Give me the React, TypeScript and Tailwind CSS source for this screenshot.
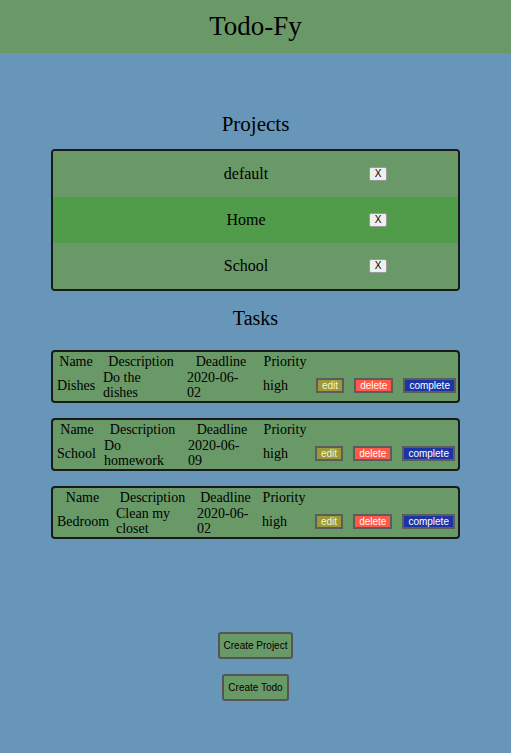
import React from 'react';

interface Task {
  name: string;
  desc: string[];
  deadline: string[];
  priority: string;
  cols: string;
}

const projects = [
  { name: 'default', active: false },
  { name: 'Home', active: true },
  { name: 'School', active: false },
];

// column widths differ per card, like an auto-layout table would give
const tasks: Task[] = [
  {
    name: 'Dishes',
    desc: ['Do the', 'dishes'],
    deadline: ['2020-06-', '02'],
    priority: 'high',
    cols: 'grid-cols-[38px_76px_68px_44px_auto] gap-x-[8px]',
  },
  {
    name: 'School',
    desc: ['Do', 'homework'],
    deadline: ['2020-06-', '09'],
    priority: 'high',
    cols: 'grid-cols-[40px_77px_68px_44px_auto] gap-x-[7px]',
  },
  {
    name: 'Bedroom',
    desc: ['Clean my', 'closet'],
    deadline: ['2020-06-', '02'],
    priority: 'high',
    cols: 'grid-cols-[51px_73px_57px_44px_auto] gap-x-[8px]',
  },
];

const serif = "font-['Liberation_Serif',serif]";
const sans = "font-['Liberation_Sans',Arial,sans-serif]";

const TaskCard: React.FC<{ task: Task }> = ({ task }) => (
  <div className={`mx-[51px] border-2 border-[#1a1a1a] rounded-[4px] bg-[#699967] pl-[4px] pt-[2px] pb-[1px] ${serif}`}>
    <div className={`grid ${task.cols} gap-y-[1px] items-center text-[14px] leading-[15px] text-black`}>
      <div className="text-center">Name</div>
      <div className="text-center">Description</div>
      <div className="text-center">Deadline</div>
      <div className="text-center">Priority</div>
      <div />
      <div>{task.name}</div>
      <div>
        {task.desc[0]}
        <br />
        {task.desc[1]}
      </div>
      <div>
        {task.deadline[0]}
        <br />
        {task.deadline[1]}
      </div>
      <div>{task.priority}</div>
      <div className={`flex gap-[10px] ml-[1px] ${sans} text-[10px] leading-[11px] text-white`}>
        <button className="border-2 border-[#5c5c5c] bg-[#9a9a38] px-[4px] text-[#f4f4d8]">edit</button>
        <button className="border-2 border-[#5c5c5c] bg-[#ff5a48] px-[4px]">delete</button>
        <button className="border-2 border-[#5c5c5c] bg-[#1c35a5] px-[4px]">complete</button>
      </div>
    </div>
  </div>
);

export default function App() {
  return (
    <div className={`min-h-[753px] bg-[#6896b8] ${serif} text-black`}>
      <header className="h-[53px] bg-[#699967] flex items-center justify-center">
        <h1 className="text-[27px] leading-none">Todo-Fy</h1>
      </header>

      <h2 className="mt-[60px] text-center text-[21px] leading-[22px]">Projects</h2>

      <div className="mt-[14px] mx-[51px] border-2 border-[#1a1a1a] rounded-[4px] bg-[#699967] overflow-hidden">
        {projects.map((p) => (
          <div
            key={p.name}
            className={`flex items-center h-[46px] ${p.active ? 'bg-[#509c4a]' : 'bg-[#699967]'}`}
          >
            <div className="ml-[78px] w-[230px] text-center text-[16px]">{p.name}</div>
            <button
              className={`ml-[8px] w-[18px] h-[14px] flex items-center justify-center bg-[#efefef] border border-[#9a9a9a] rounded-[2px] ${sans} text-[10px] leading-none`}
            >
              X
            </button>
          </div>
        ))}
      </div>

      <h2 className="mt-[16px] text-center text-[20px] leading-[22px]">Tasks</h2>

      <div className="mt-[21px] flex flex-col gap-[15px]">
        {tasks.map((t) => (
          <TaskCard key={t.name} task={t} />
        ))}
      </div>

      <div className={`mt-[93px] flex flex-col items-center gap-[15px] ${sans} text-[10px] leading-[11px]`}>
        <button className="border-2 border-[#555] rounded-[3px] bg-[#699967] px-[4px] py-[6px]">Create Project</button>
        <button className="border-2 border-[#555] rounded-[3px] bg-[#699967] px-[4px] py-[6px]">Create Todo</button>
      </div>
    </div>
  );
}
